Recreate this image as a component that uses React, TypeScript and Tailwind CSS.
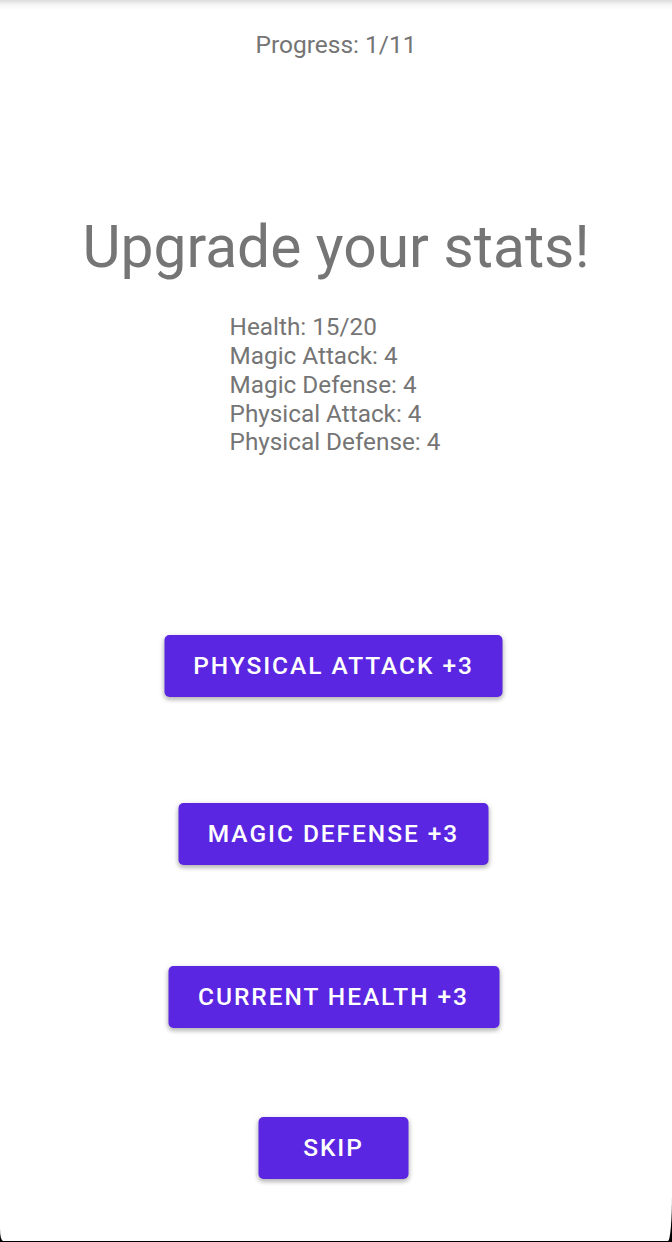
import React from "react";

const btn =
  "h-[62px] rounded-[5px] bg-[#5a26e1] px-[29px] text-white text-[24.5px] font-medium uppercase tracking-[1.95px] leading-none shadow-[0_3px_4px_rgba(0,0,0,0.22),0_1px_6px_rgba(0,0,0,0.12)] flex items-center justify-center -translate-x-[2.5px]";

export default function App() {
  const stats = [
    "Health: 15/20",
    "Magic Attack: 4",
    "Magic Defense: 4",
    "Physical Attack: 4",
    "Physical Defense: 4",
  ];
  return (
    <div className="w-[672px] h-[1242px] bg-black overflow-hidden" style={{ fontFamily: "Roboto, 'Noto Sans', sans-serif" }}>
      <div className="w-[672px] h-[1241px] bg-white rounded-bl-[3px_12px] rounded-br-[4px_46px] flex flex-col items-center">
        <div className="w-full h-[10px] bg-gradient-to-b from-[#dcdcdc] via-[#f6f6f6] to-white" />
        <div className="mt-[21px] text-[24.5px] leading-[28.7px] text-[#757575]">Progress: 1/11</div>
        <div className="mt-[153px] text-[58.7px] leading-[69.7px] text-[#757575]">Upgrade your stats!</div>
        <div className="mt-[31px] -translate-x-[1px] flex flex-col text-[24.3px] leading-[28.7px] text-[#757575]">
          {stats.map((s) => (
            <div key={s}>{s}</div>
          ))}
        </div>
        <button className={`mt-[178px] ${btn}`}>Physical Attack +3</button>
        <button className={`mt-[106px] ${btn}`}>Magic Defense +3</button>
        <button className={`mt-[101px] ${btn} px-[30px]`}>Current Health +3</button>
        <button className={`mt-[89px] ${btn} px-[45px]`}>Skip</button>
      </div>
    </div>
  );
}
